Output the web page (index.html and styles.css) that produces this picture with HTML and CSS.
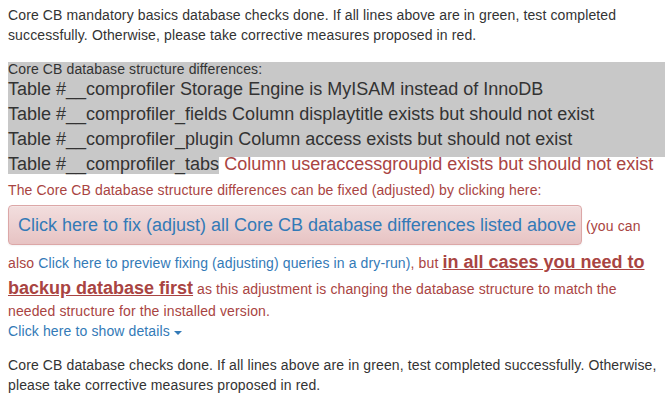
FILE: index.html
```html
<!DOCTYPE html>
<html>
<head>
<meta charset="utf-8">
<link rel="stylesheet" href="styles.css">
</head>
<body>
<div class="page">
  <p class="intro">Core CB mandatory basics database checks done. If all lines above are in green, test completed successfully. Otherwise, please take corrective measures proposed in red.</p>
  <div class="diffs">
    <div class="diffs-head">Core CB database structure differences:</div>
    <div class="diff-line">Table #__comprofiler Storage Engine is MyISAM instead of InnoDB</div>
    <div class="diff-line">Table #__comprofiler_fields Column displaytitle exists but should not exist</div>
    <div class="diff-line">Table #__comprofiler_plugin Column access exists but should not exist</div>
  </div>
  <div class="diff-last"><span class="diff-table">Table #__comprofiler_tabs</span> <span class="text-danger">Column useraccessgroupid exists but should not exist</span></div>
  <p class="fix-note text-danger">The Core CB database structure differences can be fixed (adjusted) by clicking here:</p>
  <p class="fix text-danger"><a class="btn-fix" href="#">Click here to fix (adjust) all Core CB database differences listed above</a> (you can also <a class="link" href="#">Click here to preview fixing (adjusting) queries in a dry-run)</a>, but <strong class="backup">in all cases you need to backup database first</strong> as this adjustment is changing the database structure to match the needed structure for the installed version.</p>
  <a class="details" href="#">Click here to show details <span class="caret"></span></a>
  <p class="outro">Core CB database checks done. If all lines above are in green, test completed successfully. Otherwise, please take corrective measures proposed in red.</p>
</div>
</body>
</html>
```
FILE: styles.css
```css
body {
  margin: 0;
  font-family: "Liberation Sans", Arial, sans-serif;
  font-size: 14px;
  line-height: 20px;
  letter-spacing: 0.12px;
  color: #333;
  background: #fff;
}

.page {
  padding: 5px 3px 0 8px;
}

.intro {
  margin: 0 0 17px;
}

.diffs {
  background: #c8c8c8;
  padding-bottom: 5px;
}

.diffs-head {
  line-height: 15px;
}

.diff-line {
  font-size: 18px;
  line-height: 25px;
  letter-spacing: 0;
}

.diff-last {
  font-size: 18px;
  line-height: 14px;
  letter-spacing: 0;
}

.diff-table {
  background: #c8c8c8;
}

.text-danger {
  color: #a94442;
}

.fix-note {
  margin: 9px 0 5px;
}

.fix {
  margin: 0;
}

.btn-fix {
  display: inline-block;
  font-size: 18px;
  line-height: 24px;
  letter-spacing: 0;
  padding: 7px 5px 7px 9px;
  margin-bottom: 5px;
  border: 1px solid #dca7a7;
  border-radius: 4px;
  background: linear-gradient(to bottom, #f2dede 0, #e7c3c3 100%);
  box-shadow: inset 0 1px 0 rgba(255, 255, 255, .25), 0 1px 2px rgba(0, 0, 0, .05);
  color: #337ab7;
  text-decoration: none;
}

.link {
  color: #337ab7;
  text-decoration: none;
}

.backup {
  font-size: 18px;
  line-height: 25.7px;
  letter-spacing: 0;
  text-decoration: underline;
}

.details {
  display: block;
  color: #337ab7;
  text-decoration: none;
}

.caret {
  display: inline-block;
  width: 0;
  height: 0;
  margin-left: 0;
  vertical-align: middle;
  border-top: 4px solid;
  border-left: 4px solid transparent;
  border-right: 4px solid transparent;
}

.outro {
  margin: 14px 0 0;
}
```
